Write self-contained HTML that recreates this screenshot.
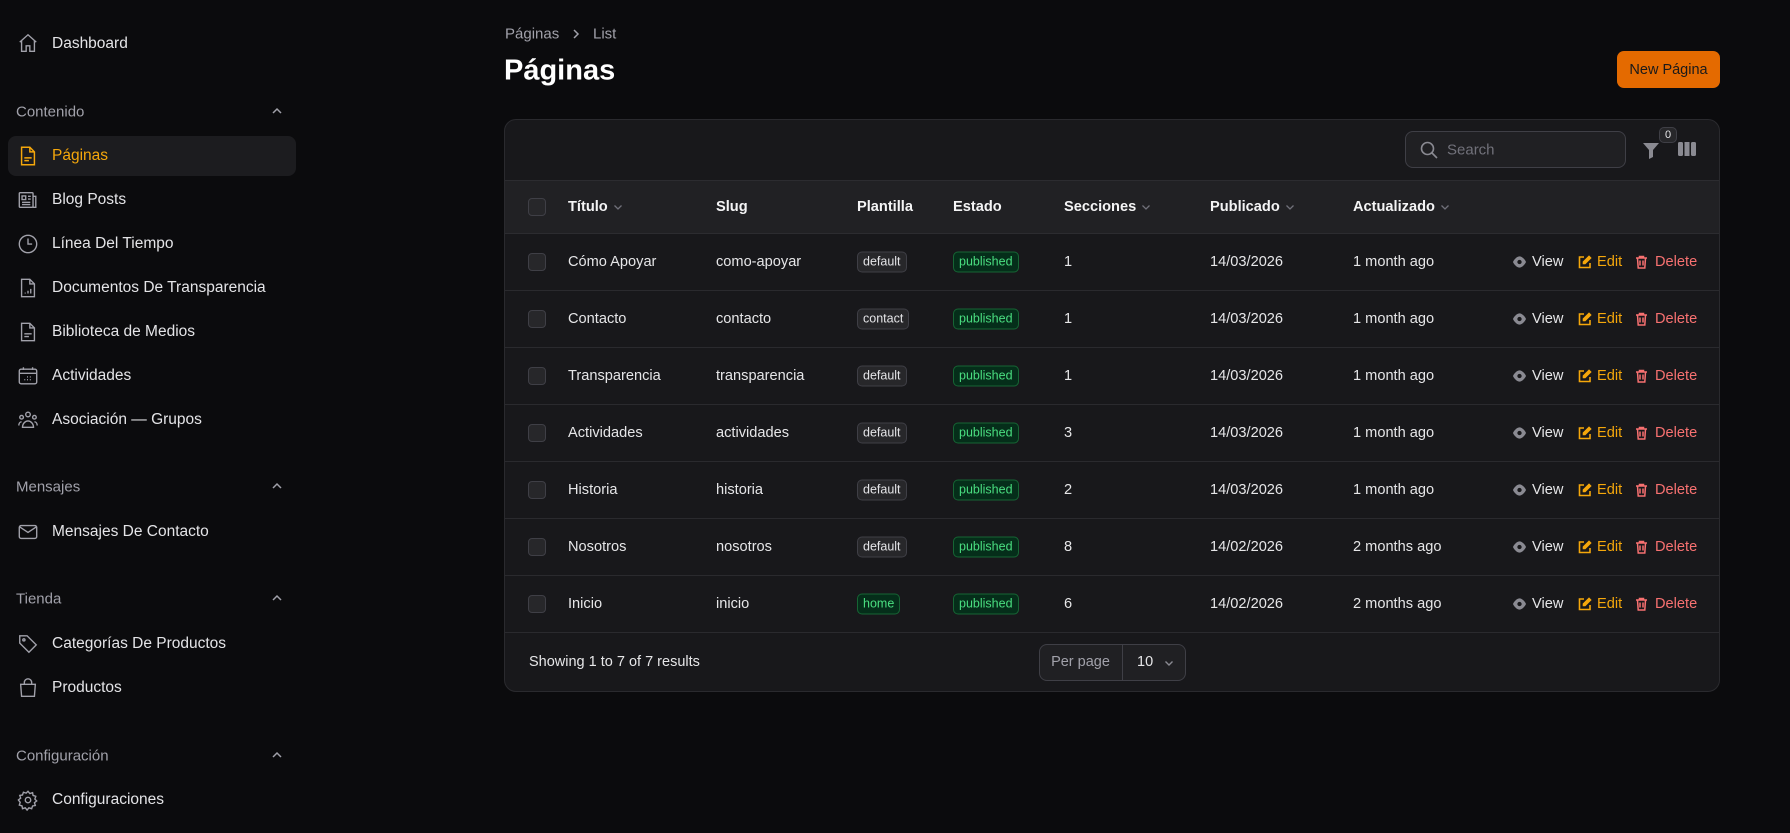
<!DOCTYPE html>
<html><head><meta charset="utf-8"><style>
*{box-sizing:border-box;margin:0;padding:0}
body{width:1790px;height:833px;background:#0b0b0d;font-family:"Liberation Sans",sans-serif;color:#e6e6e8;position:relative;overflow:hidden}
.a{position:absolute}
.nav{position:absolute;left:52px;font-size:15.5px;color:#e4e4e7;transform:translateY(-50%)}
.ic{position:absolute;left:17px;width:22px;height:22px;transform:translateY(-50%)}
.grp{position:absolute;left:16px;font-size:15px;color:#a1a1aa;transform:translateY(-50%)}
.chev{position:absolute;left:270px;transform:translateY(-50%)}
.card{position:absolute;left:504px;top:119px;width:1216px;height:573px;background:#18181b;border:1px solid #2a2a2e;border-radius:12px;overflow:hidden}
.hdr{position:absolute;left:0;top:60px;width:100%;height:54px;background:#212124;border-top:1px solid #2c2c30;border-bottom:1px solid #2c2c30}
.t{position:absolute;font-size:14.6px;transform:translateY(-50%);white-space:nowrap}
.th{font-weight:bold;color:#f4f4f5}
.th svg{vertical-align:middle;margin-left:4px}
.cb{position:absolute;left:23px;width:18px;height:18px;border:1px solid #3f3f46;border-radius:4px;background:#27272a;transform:translateY(-50%)}
.row{position:absolute;left:0;width:100%;height:57px;border-bottom:1px solid #2a2a2e}
.bd{position:absolute;font-size:12.5px;padding:2px 5px;border-radius:5px;transform:translateY(-50%);line-height:15px}
.gr{background:#27272a;border:1px solid #3f3f46;color:#e4e4e7}
.gn{background:#052e1a;border:1px solid #166534;color:#4ade80}
</style></head><body>
<svg class="ic" style="top:43px" viewBox="0 0 24 24" fill="none" stroke="#a1a1aa" stroke-width="1.5"><path d="M3 11l9-8 9 8M5 9.5V21h5v-6h4v6h5V9.5"/></svg>
<div class="nav" style="top:44px">Dashboard</div>
<div class="grp" style="top:112px">Contenido</div>
<svg class="chev" style="top:111px" width="14" height="14" viewBox="0 0 14 14" fill="none" stroke="#a1a1aa" stroke-width="1.5"><path d="M3 9l4-4 4 4"/></svg>
<div class="a" style="left:8px;top:136px;width:288px;height:40px;background:#1c1c1f;border-radius:8px"></div>
<svg class="ic" style="top:156px" viewBox="0 0 24 24" fill="none" stroke="#f5a70b" stroke-width="1.6"><path d="M5 2.5h9l5 5V21.5H5z M14 2.5V7.5h5 M8 17h5 M8 14h8"/></svg>
<div class="nav" style="top:156px;color:#f5a70b">Páginas</div>
<svg class="ic" style="top:200px" viewBox="0 0 24 24" fill="none" stroke="#a1a1aa" stroke-width="1.5"><rect x="2.5" y="4" width="15" height="16" rx="1"/><path d="M17.5 8h3v12h-3M5.5 7.5h4v4h-4zM12 8h3M12 11h3M5.5 14.5h9M5.5 17h9"/></svg>
<div class="nav" style="top:200px">Blog Posts</div>
<svg class="ic" style="top:244px" viewBox="0 0 24 24" fill="none" stroke="#a1a1aa" stroke-width="1.5"><circle cx="12" cy="12" r="9.5"/><path d="M12 6v6h4.5"/></svg>
<div class="nav" style="top:244px">Línea Del Tiempo</div>
<svg class="ic" style="top:288px" viewBox="0 0 24 24" fill="none" stroke="#a1a1aa" stroke-width="1.5"><path d="M5 2.5h9l5 5V21.5H5z M14 2.5V7.5h5 M9 18v-1 M12 18v-3 M15 18v-5"/></svg>
<div class="nav" style="top:288px">Documentos De Transparencia</div>
<svg class="ic" style="top:332px" viewBox="0 0 24 24" fill="none" stroke="#a1a1aa" stroke-width="1.5"><path d="M5 2.5h9l5 5V21.5H5z M14 2.5V7.5h5 M8 17h5 M8 14h8"/></svg>
<div class="nav" style="top:332px">Biblioteca de Medios</div>
<svg class="ic" style="top:376px" viewBox="0 0 24 24" fill="none" stroke="#a1a1aa" stroke-width="1.5"><rect x="2.5" y="4.5" width="19" height="16" rx="2"/><path d="M2.5 9h19M7 2.5v3M17 2.5v3M8 16h1M11 16h1M14 16h1M11 13h1M14 13h1"/></svg>
<div class="nav" style="top:376px">Actividades</div>
<svg class="ic" style="top:420px" viewBox="0 0 24 24" fill="none" stroke="#a1a1aa" stroke-width="1.5"><circle cx="12" cy="6" r="2.5"/><circle cx="5" cy="9" r="2"/><circle cx="19" cy="9" r="2"/><path d="M6 20c0-4 3-7 6-7s6 3 6 7zM2 18c0-2 1-4 3-4M22 18c0-2-1-4-3-4"/></svg>
<div class="nav" style="top:420px">Asociación — Grupos</div>
<div class="grp" style="top:487px">Mensajes</div>
<svg class="chev" style="top:486px" width="14" height="14" viewBox="0 0 14 14" fill="none" stroke="#a1a1aa" stroke-width="1.5"><path d="M3 9l4-4 4 4"/></svg>
<svg class="ic" style="top:532px" viewBox="0 0 24 24" fill="none" stroke="#a1a1aa" stroke-width="1.5"><rect x="2.5" y="5" width="19" height="14" rx="2"/><path d="M3 6.5l9 6 9-6"/></svg>
<div class="nav" style="top:532px">Mensajes De Contacto</div>
<div class="grp" style="top:599px">Tienda</div>
<svg class="chev" style="top:598px" width="14" height="14" viewBox="0 0 14 14" fill="none" stroke="#a1a1aa" stroke-width="1.5"><path d="M3 9l4-4 4 4"/></svg>
<svg class="ic" style="top:644px" viewBox="0 0 24 24" fill="none" stroke="#a1a1aa" stroke-width="1.5"><path d="M3 3h8l10 10-8 8L3 11z"/><circle cx="7.5" cy="7.5" r="1.2"/></svg>
<div class="nav" style="top:644px">Categorías De Productos</div>
<svg class="ic" style="top:688px" viewBox="0 0 24 24" fill="none" stroke="#a1a1aa" stroke-width="1.5"><path d="M4 8h16l-1 13H5zM8 8V6a4 4 0 018 0v2"/></svg>
<div class="nav" style="top:688px">Productos</div>
<div class="grp" style="top:756px">Configuración</div>
<svg class="chev" style="top:755px" width="14" height="14" viewBox="0 0 14 14" fill="none" stroke="#a1a1aa" stroke-width="1.5"><path d="M3 9l4-4 4 4"/></svg>
<svg class="ic" style="top:800px" viewBox="0 0 24 24" fill="none" stroke="#a1a1aa" stroke-width="1.5"><circle cx="12" cy="12" r="3"/><path d="M12 2.5l2 2.5 3-1 .5 3 3 1-1 3 2 2-2.5 2 1 3-3 .5-1 3-3-1-2 2.5-2-2.5-3 1-.5-3-3-1 1-3L1.5 12 4 10 3 7l3-.5 1-3 3 1z"/></svg>
<div class="nav" style="top:800px">Configuraciones</div>

<div class="t" style="left:505px;top:34px;font-size:15px;color:#a1a1aa">Páginas</div>
<svg class="a" style="left:570px;top:28px" width="12" height="12" viewBox="0 0 12 12" fill="none" stroke="#a1a1aa" stroke-width="1.5"><path d="M4 2l4 4-4 4"/></svg>
<div class="t" style="left:593px;top:34px;font-size:15px;color:#a1a1aa">List</div>
<div class="t" style="left:504px;top:71px;font-size:29px;font-weight:bold;color:#fff">Páginas</div>
<div class="a" style="left:1617px;top:51px;width:103px;height:37px;background:#e46a00;border-radius:7px;font-size:14.5px;color:#1a1a1a;text-align:center;line-height:39px">New Página</div>

<div class="card">
 <div class="a" style="left:900px;top:11px;width:221px;height:37px;border:1px solid #3f3f46;border-radius:8px;background:#202023"></div>
 <svg class="a" style="left:914px;top:20px" width="20" height="20" viewBox="0 0 20 20" fill="none" stroke="#8a8a92" stroke-width="1.6"><circle cx="8.5" cy="8.5" r="6"/><path d="M13 13l5 5"/></svg>
 <div class="t" style="left:942px;top:30px;color:#71717a;font-size:15px">Search</div>
 <svg class="a" style="left:1136px;top:20px" width="20" height="20" viewBox="0 0 20 20"><path d="M2 3h16l-6 7v7l-4 2v-9z" fill="#8a8a92"/></svg>
 <div class="a" style="left:1154px;top:7px;width:18px;height:16px;background:#27272a;border:1px solid #3f3f46;border-radius:5px;font-size:11px;text-align:center;line-height:14px">0</div>
 <svg class="a" style="left:1172px;top:21px" width="20" height="16" viewBox="0 0 20 16"><rect x="1" y="1" width="5" height="14" rx="1.5" fill="#8a8a92"/><rect x="7.5" y="1" width="5" height="14" fill="#8a8a92"/><rect x="14" y="1" width="5" height="14" rx="1.5" fill="#8a8a92"/></svg>

 <div class="hdr">
  <div class="cb" style="top:26px"></div>
  <div class="t th" style="left:63px;top:26px">Título<svg width="12" height="12" viewBox="0 0 12 12" fill="none" stroke="#71717a" stroke-width="1.3"><path d="M2.5 4.5l3.5 3.5 3.5-3.5"/></svg></div>
  <div class="t th" style="left:211px;top:26px">Slug</div>
  <div class="t th" style="left:352px;top:26px">Plantilla</div>
  <div class="t th" style="left:448px;top:26px">Estado</div>
  <div class="t th" style="left:559px;top:26px">Secciones<svg width="12" height="12" viewBox="0 0 12 12" fill="none" stroke="#71717a" stroke-width="1.3"><path d="M2.5 4.5l3.5 3.5 3.5-3.5"/></svg></div>
  <div class="t th" style="left:705px;top:26px">Publicado<svg width="12" height="12" viewBox="0 0 12 12" fill="none" stroke="#71717a" stroke-width="1.3"><path d="M2.5 4.5l3.5 3.5 3.5-3.5"/></svg></div>
  <div class="t th" style="left:848px;top:26px">Actualizado<svg width="12" height="12" viewBox="0 0 12 12" fill="none" stroke="#71717a" stroke-width="1.3"><path d="M2.5 4.5l3.5 3.5 3.5-3.5"/></svg></div>
 </div>

 <div id="rows"></div>

 <div class="t" style="left:24px;top:542px;font-size:14.5px">Showing 1 to 7 of 7 results</div>
 <div class="a" style="left:534px;top:524px;width:147px;height:37px;border:1px solid #3f3f46;border-radius:8px;background:#202023"></div>
 <div class="a" style="left:534px;top:524px;width:84px;height:37px;border-right:1px solid #3f3f46;font-size:14.5px;color:#a1a1aa;text-align:center;line-height:37px">Per page</div>
 <div class="t" style="left:632px;top:542px;font-size:14.5px">10</div>
 <svg class="a" style="left:658px;top:537px" width="12" height="12" viewBox="0 0 12 12" fill="none" stroke="#8a8a92" stroke-width="1.4"><path d="M2.5 4.5l3.5 3.5 3.5-3.5"/></svg>
</div>
<script>
var d=[["Cómo Apoyar","como-apoyar","default",1,"14/03/2026","1 month ago"],["Contacto","contacto","contact",1,"14/03/2026","1 month ago"],["Transparencia","transparencia","default",1,"14/03/2026","1 month ago"],["Actividades","actividades","default",3,"14/03/2026","1 month ago"],["Historia","historia","default",2,"14/03/2026","1 month ago"],["Nosotros","nosotros","default",8,"14/02/2026","2 months ago"],["Inicio","inicio","home",6,"14/02/2026","2 months ago"]];
var h="";d.forEach(function(r,i){var top=114+i*57;var c=28;
h+='<div class="row" style="top:'+top+'px"><div class="cb" style="top:'+c+'px"></div>'+
'<div class="t" style="left:63px;top:'+c+'px">'+r[0]+'</div>'+
'<div class="t" style="left:211px;top:'+c+'px">'+r[1]+'</div>'+
'<div class="bd '+(r[2]=="home"?"gn":"gr")+'" style="left:352px;top:'+c+'px">'+r[2]+'</div>'+
'<div class="bd gn" style="left:448px;top:'+c+'px">published</div>'+
'<div class="t" style="left:559px;top:'+c+'px">'+r[3]+'</div>'+
'<div class="t" style="left:705px;top:'+c+'px">'+r[4]+'</div>'+
'<div class="t" style="left:848px;top:'+c+'px">'+r[5]+'</div>'+
'<svg class="a" style="left:1007px;top:'+(c-7)+'px" width="15" height="14" viewBox="0 0 16 14"><path d="M1 7c2-4 5-6 7-6s5 2 7 6c-2 4-5 6-7 6s-5-2-7-6z" fill="#8a8a92"/><circle cx="8" cy="7" r="2.3" fill="#18181b"/></svg>'+
'<div class="t" style="left:1027px;top:'+c+'px">View</div>'+
'<svg class="a" style="left:1073px;top:'+(c-7)+'px" width="14" height="14" viewBox="0 0 14 14" fill="none" stroke="#f5a70b" stroke-width="1.6"><path d="M6 2H1.5v10.5H12V8"/><path d="M11 1.5l1.5 1.5L7 8.5H5.5V7z" fill="#f5a70b"/></svg>'+
'<div class="t" style="left:1092px;top:'+c+'px;color:#f5a70b">Edit</div>'+
'<svg class="a" style="left:1130px;top:'+(c-7)+'px" width="13" height="14" viewBox="0 0 13 14" fill="none" stroke="#f87171" stroke-width="1.5"><path d="M1 3h11M4.5 3V1.5h4V3M2.5 3l.7 10h6.6l.7-10M5 5.5v5M8 5.5v5"/></svg>'+
'<div class="t" style="left:1150px;top:'+c+'px;color:#f87171">Delete</div></div>';});
document.getElementById("rows").outerHTML=h;
</script>
</body></html>
